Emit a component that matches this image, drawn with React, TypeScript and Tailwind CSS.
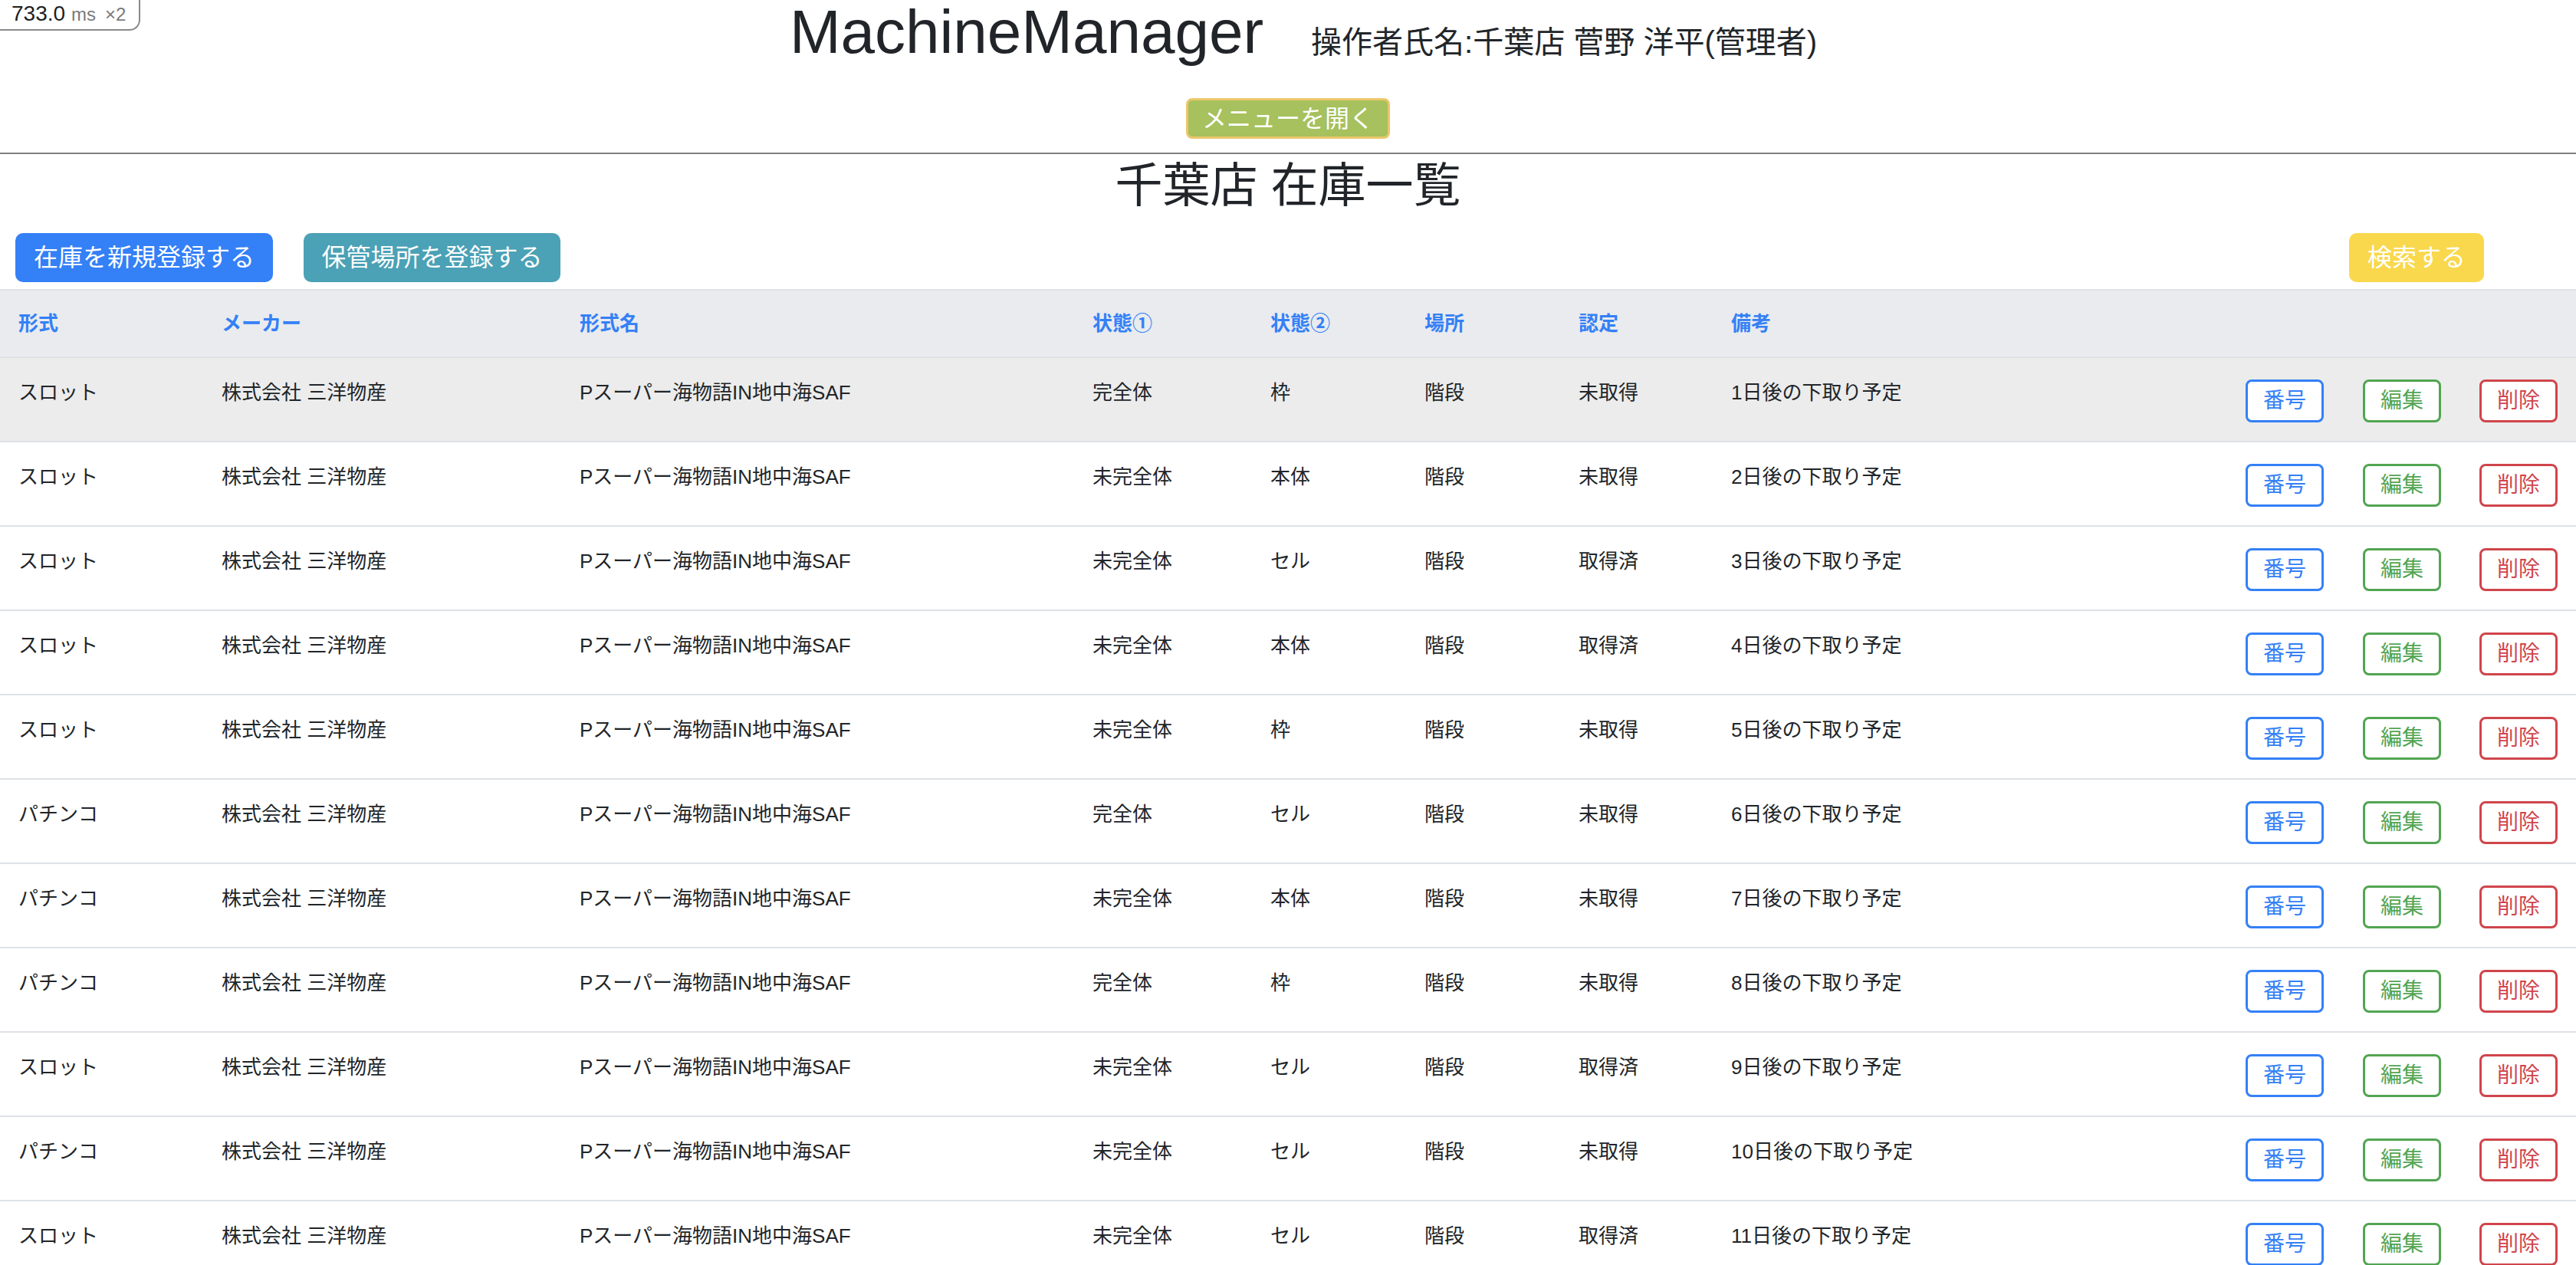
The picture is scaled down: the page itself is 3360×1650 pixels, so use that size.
import React from "react";

type Row = [string, string, string, string, string, string];

const rows: Row[] = [
  ["スロット", "完全体", "枠", "階段", "未取得", "1日後の下取り予定"],
  ["スロット", "未完全体", "本体", "階段", "未取得", "2日後の下取り予定"],
  ["スロット", "未完全体", "セル", "階段", "取得済", "3日後の下取り予定"],
  ["スロット", "未完全体", "本体", "階段", "取得済", "4日後の下取り予定"],
  ["スロット", "未完全体", "枠", "階段", "未取得", "5日後の下取り予定"],
  ["パチンコ", "完全体", "セル", "階段", "未取得", "6日後の下取り予定"],
  ["パチンコ", "未完全体", "本体", "階段", "未取得", "7日後の下取り予定"],
  ["パチンコ", "完全体", "枠", "階段", "未取得", "8日後の下取り予定"],
  ["スロット", "未完全体", "セル", "階段", "取得済", "9日後の下取り予定"],
  ["パチンコ", "未完全体", "セル", "階段", "未取得", "10日後の下取り予定"],
  ["スロット", "未完全体", "セル", "階段", "取得済", "11日後の下取り予定"],
  ["スロット", "未完全体", "セル", "階段", "取得済", "12日後の下取り予定"],
];

const gridCols =
  "grid grid-cols-[265px_467px_669px_232px_201px_201px_199px_671px_153px_152px_150px]";

const font = {
  fontFamily: '"Liberation Sans", "Noto Sans CJK JP", sans-serif',
};

export default function App() {
  return (
    <div className="relative h-[1650px] overflow-hidden bg-white text-[#212529]" style={font}>
      {/* timing badge */}
      <div className="absolute left-0 top-0 z-10 flex h-[40px] w-[183px] items-baseline rounded-br-[14px] border-b-2 border-r-2 border-[#8a8a8a] bg-white pl-[15px] pt-[4px]">
        <span className="text-[28px] leading-none text-[#1f1f1f]">733.0</span>
        <span className="ml-[8px] text-[24px] leading-none text-[#7a7a7a]">ms</span>
        <span className="ml-[12px] text-[24px] leading-none text-[#7a7a7a]">×2</span>
      </div>

      {/* header */}
      <header className="flex h-[201px] flex-col items-center border-b-2 border-[#808080]">
        <div className="flex items-baseline pl-[40px] pt-[2px]">
          <h1 className="text-[80px] font-normal leading-none text-[#212529]">MachineManager</h1>
          <span className="ml-[62px] text-[40px] leading-none text-[#212529]">
            操作者氏名:千葉店 菅野 洋平(管理者)
          </span>
        </div>
        <button className="mt-[46px] flex h-[53px] w-[266px] items-center justify-center rounded-[8px] border-[3px] border-[#ebc76b] bg-[#a6c15d] text-[32px] leading-none text-white">
          メニューを開く
        </button>
      </header>

      <h2 className="mt-[11px] text-center text-[62px] font-normal leading-none text-[#212529]">
        千葉店 在庫一覧
      </h2>

      {/* action buttons */}
      <div className="mt-[30px] flex h-[64px] items-center justify-between pl-[20px] pr-[120px]">
        <div className="flex gap-[40px]">
          <button className="flex h-[64px] w-[336px] items-center justify-center rounded-[10px] bg-[#3480f6] text-[32px] leading-none text-white">
            在庫を新規登録する
          </button>
          <button className="flex h-[64px] w-[335px] items-center justify-center rounded-[10px] bg-[#4ba1b5] text-[32px] leading-none text-white">
            保管場所を登録する
          </button>
        </div>
        <button className="flex h-[64px] w-[176px] items-center justify-center rounded-[10px] bg-[#f9d84d] text-[32px] leading-none text-white">
          検索する
        </button>
      </div>

      {/* table */}
      <div className="mt-[9px]">
        <div
          className={`${gridCols} h-[90px] items-center border-y-2 border-[#dee2e6] bg-[#e9ebef] text-[26px] font-bold text-[#3480f6]`}
        >
          <div className="pl-[24px]">形式</div>
          <div className="pl-[24px]">メーカー</div>
          <div className="pl-[24px]">形式名</div>
          <div className="pl-[24px]">状態①</div>
          <div className="pl-[24px]">状態②</div>
          <div className="pl-[24px]">場所</div>
          <div className="pl-[24px]">認定</div>
          <div className="pl-[24px]">備考</div>
          <div />
          <div />
          <div />
        </div>

        {rows.map((r, i) => (
          <div
            key={i}
            className={`${gridCols} h-[110px] border-b-2 border-[#dee2e6] text-[26px] leading-[39px] ${
              i === 0 ? "bg-[#ececec]" : "bg-white"
            }`}
          >
            <div className="pl-[24px] pt-[26px]">{r[0]}</div>
            <div className="pl-[24px] pt-[26px]">株式会社 三洋物産</div>
            <div className="pl-[24px] pt-[26px]">Pスーパー海物語IN地中海SAF</div>
            <div className="pl-[24px] pt-[26px]">{r[1]}</div>
            <div className="pl-[24px] pt-[26px]">{r[2]}</div>
            <div className="pl-[24px] pt-[26px]">{r[3]}</div>
            <div className="pl-[24px] pt-[26px]">{r[4]}</div>
            <div className="pl-[24px] pt-[26px]">{r[5]}</div>
            <div className="pl-[24px] pt-[28px]">
              <button className="flex h-[56px] w-[102px] items-center justify-center rounded-[8px] border-[3px] border-[#3480f6] bg-white text-[28px] leading-none text-[#3480f6]">
                番号
              </button>
            </div>
            <div className="pl-[24px] pt-[28px]">
              <button className="flex h-[56px] w-[102px] items-center justify-center rounded-[8px] border-[3px] border-[#52a552] bg-white text-[28px] leading-none text-[#52a552]">
                編集
              </button>
            </div>
            <div className="pl-[24px] pt-[28px]">
              <button className="flex h-[56px] w-[102px] items-center justify-center rounded-[8px] border-[3px] border-[#d0454b] bg-white text-[28px] leading-none text-[#d0454b]">
                削除
              </button>
            </div>
          </div>
        ))}
      </div>
    </div>
  );
}
